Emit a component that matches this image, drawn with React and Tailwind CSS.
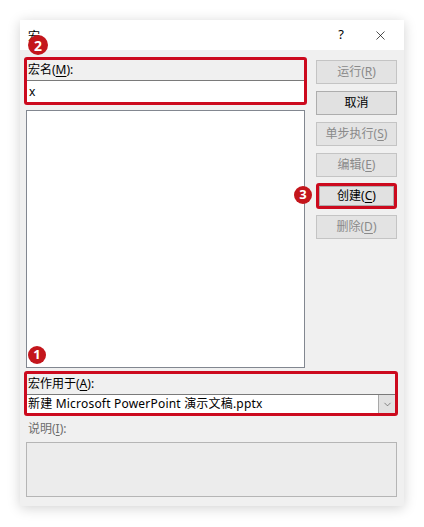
import { X, ChevronDown } from 'lucide-react';

const font = { fontFamily: '"Noto Sans", "Noto Sans CJK SC", sans-serif' };

const Key = ({ children }) => <span className="underline underline-offset-2">{children}</span>;

const Button = ({ children, disabled }) => (
  <div
    className={`h-[24px] w-full flex items-center justify-center text-[12px] border ${
      disabled ? 'bg-[#e3e3e3] border-[#c4c4c4] text-[#8a8a8a]' : 'bg-[#e1e1e1] border-[#adadad] text-black'
    }`}
  >
    {children}
  </div>
);

const Badge = ({ n, className }) => (
  <div
    className={`absolute rounded-full bg-[#c4161c] text-white font-bold flex items-center justify-center ${className}`}
  >
    {n}
  </div>
);

export default function App() {
  return (
    <div className="w-[424px] h-[527px] bg-white pt-[20px] pl-[20px]" style={font}>
      <div className="relative w-[384px] h-[486px] bg-[#f0f0f0] shadow-[0_2px_12px_rgba(0,0,0,0.18)] flex flex-col">
        {/* Title bar */}
        <div className="h-[30px] bg-white flex items-center pl-[8px] text-[12px] text-black">
          <span className="mt-[4px]">宏</span>
          <span className="ml-auto mr-[29px] text-[13px]">?</span>
          <X size={15} strokeWidth={1.1} className="mr-[16px] text-black" />
        </div>

        <div className="pl-[4px] pr-[6px] pt-[7px] text-[12px] text-black">
          <div className="flex gap-[9px]">
            {/* Left column */}
            <div className="w-[283px] flex flex-col">
              <div className="h-[48px] border-[3px] border-[#cc0a1e] rounded-[3px] flex flex-col">
                <div className="h-[20px] flex items-center pl-[1px]">
                  宏名(<Key>M</Key>):
                </div>
                <div className="h-[22px] bg-white border-t border-[#7a7a7a] flex items-center pl-[2px]">x</div>
              </div>
              <div className="mt-[5px] ml-[2px] w-[279px] h-[258px] bg-white border border-[#828790]" />
            </div>

            {/* Buttons */}
            <div className="w-[81px] mt-[3px] flex flex-col gap-[7px]">
              <Button disabled>
                运行(<Key>R</Key>)
              </Button>
              <Button>取消</Button>
              <Button disabled>
                单步执行(<Key>S</Key>)
              </Button>
              <Button disabled>
                编辑(<Key>E</Key>)
              </Button>
              <div className="h-[26px] -my-px border-[3px] border-[#cc0a1e] rounded-[3px]">
                <div className="h-full bg-[#e1e1e1] border border-[#adadad] flex items-center justify-center">
                  创建(<Key>C</Key>)
                </div>
              </div>
              <Button disabled>
                删除(<Key>D</Key>)
              </Button>
            </div>
          </div>

          {/* Macros in */}
          <div className="mt-[3px] h-[45px] border-[3px] border-[#cc0a1e] rounded-[3px] flex flex-col">
            <div className="h-[20px] flex items-center pl-[1px]">
              宏作用于(<Key>A</Key>):
            </div>
            <div className="h-[19px] bg-white border-t border-[#7a7a7a] flex items-center">
              <span className="pl-[1px] tracking-[0.2px]">新建 Microsoft PowerPoint 演示文稿.pptx</span>
              <div className="ml-auto h-full w-[17px] bg-[#e1e1e1] border-l border-[#a8a8a8] flex items-center justify-center">
                <ChevronDown size={11} strokeWidth={1.3} className="text-[#444]" />
              </div>
            </div>
          </div>

          {/* Description */}
          <div className="mt-[3px] h-[20px] flex items-center pl-[4px] text-[#6d6d6d]">
            说明(<Key>I</Key>):
          </div>
          <div className="mt-[3px] ml-[2px] w-[371px] h-[55px] bg-[#ececec] border border-[#b5b5b5]" />
        </div>

        <Badge n="2" className="left-[8px] top-[15px] w-[20px] h-[20px] text-[14px]" />
        <Badge n="3" className="left-[274px] top-[166px] w-[18px] h-[18px] text-[13px]" />
        <Badge n="1" className="left-[8px] top-[326px] w-[18px] h-[18px] text-[13px]" />
      </div>
    </div>
  );
}
